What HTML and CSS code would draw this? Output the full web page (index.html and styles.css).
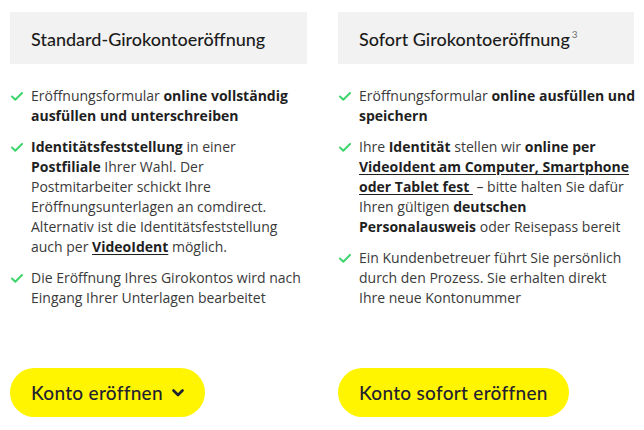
FILE: index.html
```html
<!DOCTYPE html>
<html lang="de">
<head>
<meta charset="utf-8">
<title>Girokonto eröffnen</title>
<link rel="stylesheet" href="styles.css">
</head>
<body>
<div class="grid">
  <section class="col">
    <h2 class="head">Standard-Girokontoeröffnung</h2>
    <ul class="list">
      <li><svg class="check" viewBox="0 0 12 9"><path d="M1 4.5 L4.3 7.8 L11 1"/></svg><span>Eröffnungsformular <b>online vollständig ausfüllen und unterschreiben</b></span></li>
      <li><svg class="check" viewBox="0 0 12 9"><path d="M1 4.5 L4.3 7.8 L11 1"/></svg><span><b>Identitätsfeststellung</b> in einer <b>Postfiliale</b> Ihrer Wahl. Der Postmitarbeiter schickt Ihre Eröffnungsunterlagen an comdirect. Alternativ ist die Identitätsfeststellung auch per <a class="link" href="#">VideoIdent</a> möglich.</span></li>
      <li><svg class="check" viewBox="0 0 12 9"><path d="M1 4.5 L4.3 7.8 L11 1"/></svg><span>Die Eröffnung Ihres Girokontos wird nach Eingang Ihrer Unterlagen bearbeitet</span></li>
    </ul>
    <a class="btn" href="#">Konto eröffnen<svg class="chev" viewBox="0 0 12 8"><path d="M1.5 1.5 L6 6 L10.5 1.5"/></svg></a>
  </section>
  <section class="col">
    <h2 class="head">Sofort Girokontoeröffnung<sup class="sup">3</sup></h2>
    <ul class="list list-wide">
      <li><svg class="check" viewBox="0 0 12 9"><path d="M1 4.5 L4.3 7.8 L11 1"/></svg><span>Eröffnungsformular <b>online ausfüllen und speichern</b></span></li>
      <li><svg class="check" viewBox="0 0 12 9"><path d="M1 4.5 L4.3 7.8 L11 1"/></svg><span>Ihre <b>Identität</b> stellen wir <b>online per <a class="link" href="#">VideoIdent am Computer, Smartphone oder Tablet fest&nbsp;</a></b> – bitte halten Sie dafür Ihren gültigen <b>deutschen Personalausweis</b> oder Reisepass bereit</span></li>
      <li><svg class="check" viewBox="0 0 12 9"><path d="M1 4.5 L4.3 7.8 L11 1"/></svg><span>Ein Kundenbetreuer führt Sie persönlich durch den Prozess. Sie erhalten direkt Ihre neue Kontonummer</span></li>
    </ul>
    <a class="btn" href="#">Konto sofort eröffnen</a>
  </section>
</div>
</body>
</html>
```
FILE: styles.css
```css
* { box-sizing: border-box; }
html, body { margin: 0; padding: 0; background: #fff; }
body { width: 644px; height: 430px; overflow: hidden; }
.grid {
  display: grid;
  grid-template-columns: 297px 296px;
  column-gap: 31px;
  padding: 12px 10px 0 10px;
  height: 430px;
}
.col { display: flex; flex-direction: column; }
.head {
  margin: 0;
  height: 52px;
  background: #f2f2f2;
  display: flex;
  align-items: center;
  padding: 2px 0 0 21px;
  font-family: "Lato", sans-serif;
  font-weight: 500;
  font-size: 18px;
  color: #1c1c1c;
  letter-spacing: 0;
}
.sup {
  font-size: 10px;
  color: #6f6f6f;
  font-weight: 400;
  align-self: flex-start;
  margin: 14px 0 0 2px;
}
.list {
  list-style: none;
  margin: 22px 0 0 0;
  padding: 0;
  font-family: "Open Sans", sans-serif;
  font-size: 14px;
  line-height: 20px;
  color: #3a3a3a;
}
.list-wide { margin-right: -2px; }
.list li {
  display: flex;
  margin-bottom: 11px;
}
.list b { font-weight: 700; color: #1f1f1f; }
.check {
  flex: none;
  width: 12px;
  height: 9px;
  margin: 6px 8px 0 1px;
  fill: none;
  stroke: #3fd46e;
  stroke-width: 2;
  stroke-linecap: round;
  stroke-linejoin: round;
}
.link { color: #1f1f1f; font-weight: 700; text-decoration: underline; text-underline-offset: 2px; }
.btn {
  margin-top: auto;
  margin-bottom: 13px;
  align-self: flex-start;
  height: 49px;
  border-radius: 25px;
  background: #fff500;
  display: flex;
  align-items: center;
  gap: 9px;
  padding: 0 21px 0 21px;
  font-family: "Lato", sans-serif;
  font-weight: 500;
  font-size: 19px;
  letter-spacing: 0.3px;
  color: #1f2230;
  text-decoration: none;
}
.chev {
  width: 12px;
  height: 8px;
  fill: none;
  stroke: #1f2230;
  stroke-width: 2.6;
  stroke-linecap: round;
  stroke-linejoin: round;
}
```
